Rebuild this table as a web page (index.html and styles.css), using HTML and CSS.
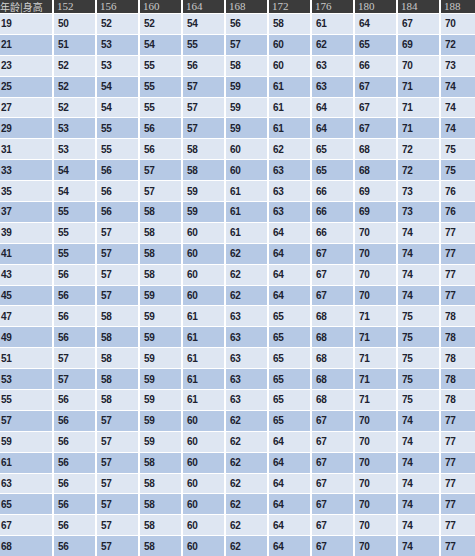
FILE: index.html
```html
<!DOCTYPE html>
<html lang="zh">
<head>
<meta charset="utf-8">
<title>年龄身高体重表</title>
<link rel="stylesheet" href="styles.css">
</head>
<body>
<div class="sheet">
  <div class="grid">
    <div class="h first">年龄|身高</div><div class="h">152</div><div class="h">156</div><div class="h">160</div><div class="h">164</div><div class="h">168</div><div class="h">172</div><div class="h">176</div><div class="h">180</div><div class="h">184</div><div class="h">188</div>

    <div class="c">19</div><div class="c">50</div><div class="c">52</div><div class="c">52</div><div class="c">54</div><div class="c">56</div><div class="c">58</div><div class="c">61</div><div class="c">64</div><div class="c">67</div><div class="c">70</div>
    <div class="c b">21</div><div class="c b">51</div><div class="c b">53</div><div class="c b">54</div><div class="c b">55</div><div class="c b">57</div><div class="c b">60</div><div class="c b">62</div><div class="c b">65</div><div class="c b">69</div><div class="c b">72</div>
    <div class="c">23</div><div class="c">52</div><div class="c">53</div><div class="c">55</div><div class="c">56</div><div class="c">58</div><div class="c">60</div><div class="c">63</div><div class="c">66</div><div class="c">70</div><div class="c">73</div>
    <div class="c b">25</div><div class="c b">52</div><div class="c b">54</div><div class="c b">55</div><div class="c b">57</div><div class="c b">59</div><div class="c b">61</div><div class="c b">63</div><div class="c b">67</div><div class="c b">71</div><div class="c b">74</div>
    <div class="c">27</div><div class="c">52</div><div class="c">54</div><div class="c">55</div><div class="c">57</div><div class="c">59</div><div class="c">61</div><div class="c">64</div><div class="c">67</div><div class="c">71</div><div class="c">74</div>
    <div class="c b">29</div><div class="c b">53</div><div class="c b">55</div><div class="c b">56</div><div class="c b">57</div><div class="c b">59</div><div class="c b">61</div><div class="c b">64</div><div class="c b">67</div><div class="c b">71</div><div class="c b">74</div>
    <div class="c">31</div><div class="c">53</div><div class="c">55</div><div class="c">56</div><div class="c">58</div><div class="c">60</div><div class="c">62</div><div class="c">65</div><div class="c">68</div><div class="c">72</div><div class="c">75</div>
    <div class="c b">33</div><div class="c b">54</div><div class="c b">56</div><div class="c b">57</div><div class="c b">58</div><div class="c b">60</div><div class="c b">63</div><div class="c b">65</div><div class="c b">68</div><div class="c b">72</div><div class="c b">75</div>
    <div class="c">35</div><div class="c">54</div><div class="c">56</div><div class="c">57</div><div class="c">59</div><div class="c">61</div><div class="c">63</div><div class="c">66</div><div class="c">69</div><div class="c">73</div><div class="c">76</div>
    <div class="c b">37</div><div class="c b">55</div><div class="c b">56</div><div class="c b">58</div><div class="c b">59</div><div class="c b">61</div><div class="c b">63</div><div class="c b">66</div><div class="c b">69</div><div class="c b">73</div><div class="c b">76</div>
    <div class="c">39</div><div class="c">55</div><div class="c">57</div><div class="c">58</div><div class="c">60</div><div class="c">61</div><div class="c">64</div><div class="c">66</div><div class="c">70</div><div class="c">74</div><div class="c">77</div>
    <div class="c b">41</div><div class="c b">55</div><div class="c b">57</div><div class="c b">58</div><div class="c b">60</div><div class="c b">62</div><div class="c b">64</div><div class="c b">67</div><div class="c b">70</div><div class="c b">74</div><div class="c b">77</div>
    <div class="c">43</div><div class="c">56</div><div class="c">57</div><div class="c">58</div><div class="c">60</div><div class="c">62</div><div class="c">64</div><div class="c">67</div><div class="c">70</div><div class="c">74</div><div class="c">77</div>
    <div class="c b">45</div><div class="c b">56</div><div class="c b">57</div><div class="c b">59</div><div class="c b">60</div><div class="c b">62</div><div class="c b">64</div><div class="c b">67</div><div class="c b">70</div><div class="c b">74</div><div class="c b">77</div>
    <div class="c">47</div><div class="c">56</div><div class="c">58</div><div class="c">59</div><div class="c">61</div><div class="c">63</div><div class="c">65</div><div class="c">68</div><div class="c">71</div><div class="c">75</div><div class="c">78</div>
    <div class="c b">49</div><div class="c b">56</div><div class="c b">58</div><div class="c b">59</div><div class="c b">61</div><div class="c b">63</div><div class="c b">65</div><div class="c b">68</div><div class="c b">71</div><div class="c b">75</div><div class="c b">78</div>
    <div class="c">51</div><div class="c">57</div><div class="c">58</div><div class="c">59</div><div class="c">61</div><div class="c">63</div><div class="c">65</div><div class="c">68</div><div class="c">71</div><div class="c">75</div><div class="c">78</div>
    <div class="c b">53</div><div class="c b">57</div><div class="c b">58</div><div class="c b">59</div><div class="c b">61</div><div class="c b">63</div><div class="c b">65</div><div class="c b">68</div><div class="c b">71</div><div class="c b">75</div><div class="c b">78</div>
    <div class="c">55</div><div class="c">56</div><div class="c">58</div><div class="c">59</div><div class="c">61</div><div class="c">63</div><div class="c">65</div><div class="c">68</div><div class="c">71</div><div class="c">75</div><div class="c">78</div>
    <div class="c b">57</div><div class="c b">56</div><div class="c b">57</div><div class="c b">59</div><div class="c b">60</div><div class="c b">62</div><div class="c b">65</div><div class="c b">67</div><div class="c b">70</div><div class="c b">74</div><div class="c b">77</div>
    <div class="c">59</div><div class="c">56</div><div class="c">57</div><div class="c">59</div><div class="c">60</div><div class="c">62</div><div class="c">64</div><div class="c">67</div><div class="c">70</div><div class="c">74</div><div class="c">77</div>
    <div class="c b">61</div><div class="c b">56</div><div class="c b">57</div><div class="c b">58</div><div class="c b">60</div><div class="c b">62</div><div class="c b">64</div><div class="c b">67</div><div class="c b">70</div><div class="c b">74</div><div class="c b">77</div>
    <div class="c">63</div><div class="c">56</div><div class="c">57</div><div class="c">58</div><div class="c">60</div><div class="c">62</div><div class="c">64</div><div class="c">67</div><div class="c">70</div><div class="c">74</div><div class="c">77</div>
    <div class="c b">65</div><div class="c b">56</div><div class="c b">57</div><div class="c b">58</div><div class="c b">60</div><div class="c b">62</div><div class="c b">64</div><div class="c b">67</div><div class="c b">70</div><div class="c b">74</div><div class="c b">77</div>
    <div class="c">67</div><div class="c">56</div><div class="c">57</div><div class="c">58</div><div class="c">60</div><div class="c">62</div><div class="c">64</div><div class="c">67</div><div class="c">70</div><div class="c">74</div><div class="c">77</div>
    <div class="c b">68</div><div class="c b">56</div><div class="c b">57</div><div class="c b">58</div><div class="c b">60</div><div class="c b">62</div><div class="c b">64</div><div class="c b">67</div><div class="c b">70</div><div class="c b">74</div><div class="c b">77</div>
  </div>
</div>
</body>
</html>
```

FILE: styles.css
```css
html, body {
  margin: 0;
  padding: 0;
  background: #ffffff;
}

.sheet {
  width: 475px;
  height: 556px;
  overflow: hidden;
  background: #ffffff;
}

.grid {
  display: grid;
  grid-template-columns: 55px repeat(10, 41px);
  grid-template-rows: 13px;
  grid-auto-rows: 19.9px;
  column-gap: 2px;
  row-gap: 1px;
  margin-left: -3px;
  width: 485px;
}

.h {
  background: #3b3b3b;
  color: #c9c9c9;
  font-family: "Liberation Serif", "Noto Sans CJK SC", serif;
  font-size: 11px;
  line-height: 12px;
  padding: 0 0 0 3px;
  white-space: nowrap;
  overflow: hidden;
}

.h.first {
  font-family: "Noto Sans CJK SC", sans-serif;
  font-size: 10px;
  line-height: 13px;
  color: #d2d2d2;
  padding-left: 3px;
}

.c {
  background: #dee6f2;
  color: #1d2230;
  font-family: "Liberation Sans", "DejaVu Sans", sans-serif;
  font-weight: 700;
  font-size: 10px;
  letter-spacing: -0.3px;
  padding-left: 4px;
  display: flex;
  align-items: center;
}

.c.b {
  background: #b6c9e5;
}
```
